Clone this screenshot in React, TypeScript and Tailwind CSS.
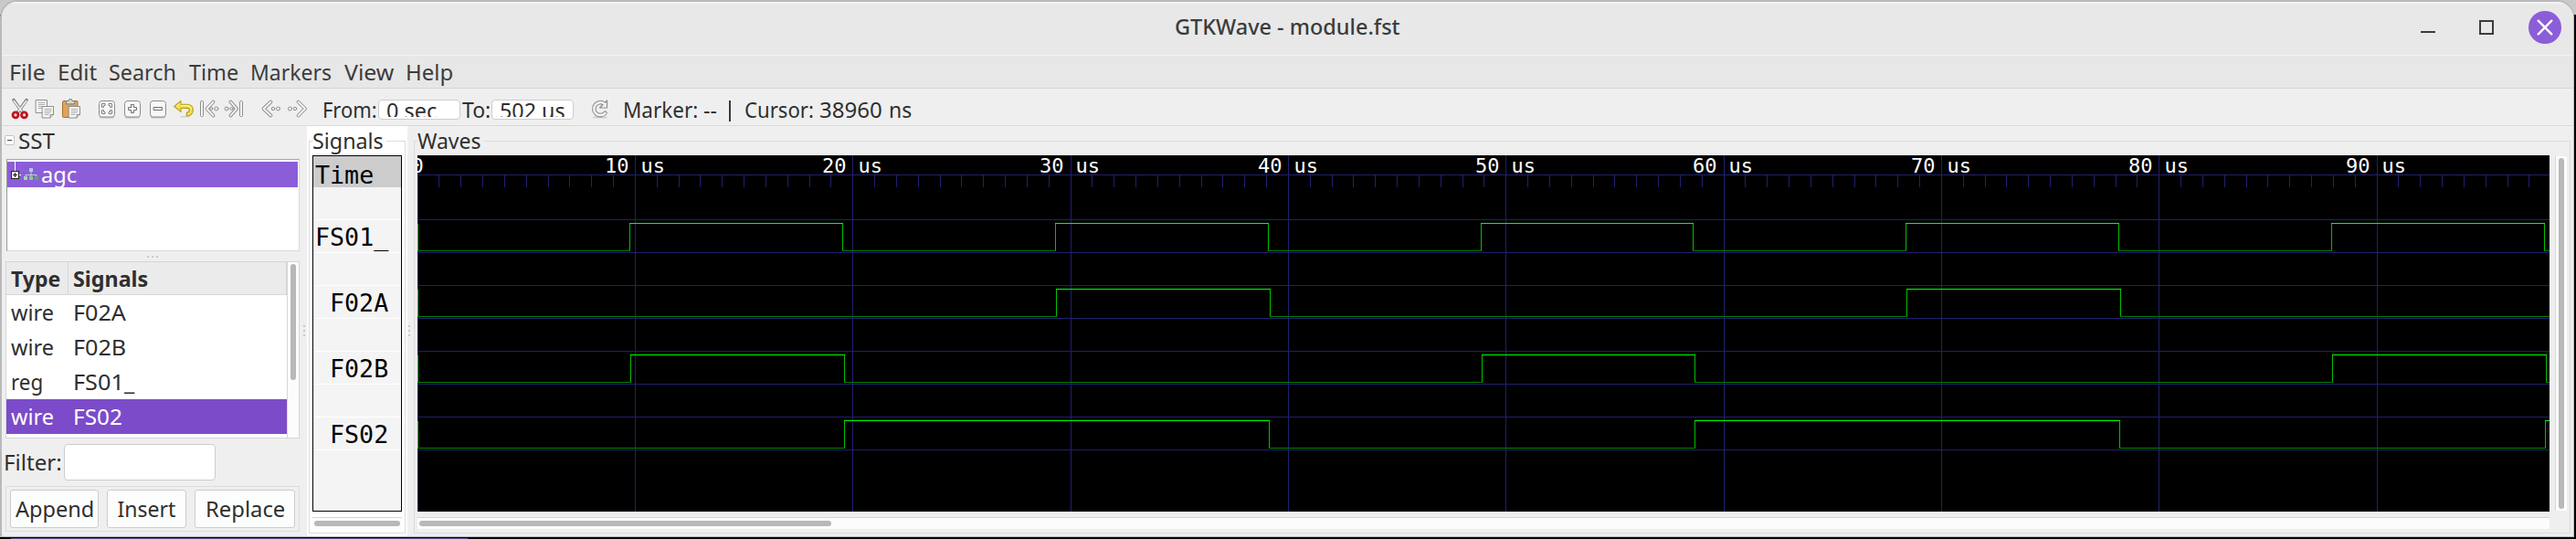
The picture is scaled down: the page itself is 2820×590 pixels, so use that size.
import { useLayoutEffect, useRef } from "react";
import type { ReactNode } from "react";

/* Text squeezed or stretched horizontally so that it fills the width of its box. */
function Fit({ className, children }: { className: string; children: string }) {
  const box = useRef<HTMLDivElement>(null);
  const text = useRef<HTMLSpanElement>(null);
  useLayoutEffect(() => {
    if (!box.current || !text.current) return;
    const ratio = box.current.clientWidth / text.current.offsetWidth;
    text.current.style.transform = `scaleX(${ratio})`;
  }, [children]);
  return (
    <div ref={box} className={`flex shrink-0 items-center whitespace-pre ${className}`}>
      <span ref={text} className="inline-block origin-left">
        {children}
      </span>
    </div>
  );
}

function Icon({ className, children }: { className: string; children: ReactNode }) {
  return (
    <svg viewBox="0 0 24 24" fill="none" strokeLinecap="round" strokeLinejoin="round" className={`h-6 w-6 shrink-0 ${className}`}>
      {children}
    </svg>
  );
}

function Key({ children }: { children: ReactNode }) {
  return (
    <>
      <rect x="4" y="20.5" width="16" height="2" rx="1" fill="#c4c4c4" />
      <rect x="3.5" y="3.5" width="17" height="17.5" rx="3" fill="#f8f8f7" stroke="#8d8f8b" />
      {children}
    </>
  );
}

function Outlined({ d }: { d: string }) {
  return (
    <>
      <path d={d} stroke="#8d8f8b" strokeWidth="3.8" />
      <path d={d} stroke="#f4f4f2" strokeWidth="1.9" />
    </>
  );
}

function Toolbar() {
  return (
    <div className="flex h-[40px] shrink-0 items-center text-[#2f2f2f]">
      <Icon className="ml-2 mt-1">
        <path d="M5 2.5 14.5 16M19 2.5 9.5 16" stroke="#7d7f7b" strokeWidth="3.4" />
        <path d="M5.3 3.5 14 15M18.7 3.5 10 15" stroke="#eeeeec" strokeWidth="1.7" />
        <circle cx="7" cy="18.8" r="3" stroke="#c1121c" strokeWidth="2.8" />
        <circle cx="16.5" cy="18.8" r="3" stroke="#c1121c" strokeWidth="2.8" />
        <path d="M5.6 17.8c.6-.8 1.5-1 2.2-.7M15.2 17.8c.6-.8 1.5-1 2.2-.7" stroke="#f05a5a" strokeWidth=".8" />
      </Icon>
      <Icon className="ml-[3px] mt-1">
        <path d="M2.5 2.5h12v14h-12z" fill="#fafafa" stroke="#8d8f8b" />
        <path d="M5 5.5h7M5 7.5h7M5 9.5h6M5 11.5h4" stroke="#a3a5a1" strokeWidth=".9" />
        <path d="M9.5 9.5h12v9l-3.5 3.5H9.5z" fill="#f6f6f5" stroke="#8d8f8b" />
        <path d="M12 12.5h7M12 14.5h7M12 16.5h6M12 18.5h4" stroke="#a3a5a1" strokeWidth=".9" />
        <path d="M21.5 18.5h-3.5v3.5" fill="#ddd" stroke="#8d8f8b" />
      </Icon>
      <Icon className="ml-[5px] mt-1">
        <rect x="2.5" y="3.5" width="16.5" height="18" rx="1" fill="#dfa45a" stroke="#a8712a" />
        <path d="M6.5 6.5v-3h2.5l.5-1.8h3l.5 1.8h2.500v3z" fill="#d5d7d3" stroke="#777975" strokeWidth=".9" />
        <path d="M9.5 9.5h12v9l-3.5 3.5H9.5z" fill="#f8f8f7" stroke="#8d8f8b" />
        <path d="M12 12.5h7M12 14.5h7M12 16.5h6M12 18.5h4" stroke="#a3a5a1" strokeWidth=".9" />
        <path d="M21.5 18.5h-3.5v3.5" fill="#ddd" stroke="#8d8f8b" />
      </Icon>
      <Icon className="ml-[15px] mt-1">
        <Key>
          <path d="M6.5 10V6.5H10v2H8.5V10zM17.5 10V6.5H14v2h1.5V10zM6.5 14v3.5H10v-2H8.5V14zM17.5 14v3.5H14v-2h1.5V14z" fill="#fff" stroke="#70726e" strokeWidth=".9" />
        </Key>
      </Icon>
      <Icon className="ml-1 mt-1">
        <Key>
          <path d="M10.500 7.500h3v3h3v3h-3v3h-3v-3h-3v-3h3z" fill="#fff" stroke="#70726e" />
        </Key>
      </Icon>
      <Icon className="ml-1 mt-1">
        <Key>
          <path d="M7.500 10.500h9v3h-9z" fill="#fff" stroke="#70726e" />
        </Key>
      </Icon>
      <Icon className="ml-1 mt-1">
        <path d="M9 20.800h9" stroke="#d2d2cc" strokeWidth="1.500" />
        <path d="M1.800 9.500 9 3.500v3.700h7c3.700 0 6.300 2.600 6.300 6.200s-2.600 6.300-5.300 6.300h-1.700v-3.400c2-.2 3.100-1.300 3.100-2.800 0-1.400-1.100-2.100-2.600-2.100H9v4z" fill="#f4de52" stroke="#b99c10" strokeWidth="1.100" />
        <path d="M4 9.300 8 6M9.500 8.700h6.700c2.600 0 4.200 1.700 4.400 4" stroke="#fdf6b4" strokeWidth="1" />
      </Icon>
      <Icon className="ml-[5px] mt-1">
        <rect x="1.500" y="3.500" width="3" height="17" rx="1" fill="#f4f4f2" stroke="#8d8f8b" />
        <Outlined d="M15.500 4.500 8.500 12l7 7.500" />
        <circle cx="13.300" cy="12" r="1.500" fill="#f4f4f2" stroke="#8d8f8b" />
        <circle cx="18.800" cy="12" r="2" fill="#f4f4f2" stroke="#8d8f8b" />
      </Icon>
      <Icon className="ml-0.5 mt-1">
        <rect x="18.500" y="3.500" width="3" height="17" rx="1" fill="#f4f4f2" stroke="#8d8f8b" />
        <Outlined d="m8.500 4.500 6.500 7.500-6.500 7.500" />
        <circle cx="4" cy="12" r="2" fill="#f4f4f2" stroke="#8d8f8b" />
        <circle cx="9.500" cy="12" r="1.500" fill="#f4f4f2" stroke="#8d8f8b" />
      </Icon>
      <Icon className="ml-[17px] mt-1">
        <Outlined d="M11.500 4.500 3.500 12l8 7.500" />
        <circle cx="14" cy="12" r="1.700" fill="#f4f4f2" stroke="#8d8f8b" />
        <circle cx="19.500" cy="12" r="2" fill="#f4f4f2" stroke="#8d8f8b" />
      </Icon>
      <Icon className="ml-1 mt-1">
        <Outlined d="m13.500 4.500 7.500 7.500-7.500 7.500" />
        <circle cx="4.500" cy="12" r="2" fill="#f4f4f2" stroke="#8d8f8b" />
        <circle cx="10" cy="12" r="1.700" fill="#f4f4f2" stroke="#8d8f8b" />
      </Icon>
      <Fit className="ml-4 mt-[7px] w-[60px]">From:</Fit>
      <div className="ml-px mt-[6px] flex h-[22px] w-[90px] shrink-0 items-center rounded-[4px] border border-[#cdcdcd] bg-white pl-2">
        <div className="flex h-[15px] items-center overflow-hidden pt-0.5">
          <Fit className="w-[55px]">0 sec</Fit>
        </div>
      </div>
      <Fit className="ml-0.5 mt-[7px] w-[31px]">To:</Fit>
      <div className="ml-px mt-[6px] flex h-[22px] w-[90px] shrink-0 items-center rounded-[4px] border border-[#cdcdcd] bg-white pl-2">
        <div className="flex h-[15px] items-center overflow-hidden pt-0.5">
          <Fit className="w-[72px]">502 us</Fit>
        </div>
      </div>
      <Icon className="ml-[17px] mt-1">
        <path d="M5 21.500h14" stroke="#c8c8c8" strokeWidth="1.500" />
        <path d="M17.500 16.800A7 7 0 1 1 16.500 6.500" stroke="#8d8f8b" strokeWidth="4.600" />
        <path d="M19.500 3v8h-8z" fill="#f2f2f0" stroke="#8d8f8b" strokeWidth="1.200" />
        <path d="M17.500 16.800A7 7 0 1 1 16.500 6.500" stroke="#f2f2f0" strokeWidth="2.500" />
      </Icon>
      <Fit className="ml-[13px] mt-[7px] w-[82px]">Marker:</Fit>
      <Fit className="ml-1.5 mt-[7px] w-[15px]">--</Fit>
      <span className="ml-[13px] mt-2 h-[23px] w-0.5 bg-[#3a3a3a]" />
      <Fit className="ml-[15px] mt-[7px] w-[76px]">Cursor:</Fit>
      <Fit className="ml-1.5 mt-[7px] w-[69px]">38960</Fit>
      <Fit className="ml-[7px] mt-[7px] w-[25px]">ns</Fit>
    </div>
  );
}

function Dots({ vertical }: { vertical?: boolean }) {
  return (
    <div className={vertical ? "flex flex-col gap-[3px]" : "flex gap-[3px]"}>
      <i className="size-0.5 bg-[#c9c9c9]" />
      <i className="size-0.5 bg-[#c9c9c9]" />
      <i className="size-0.5 bg-[#c9c9c9]" />
    </div>
  );
}

const facs = [
  { type: "wire", name: "F02A", typeWidth: "w-[47px]", nameWidth: "w-[58px]" },
  { type: "wire", name: "F02B", typeWidth: "w-[47px]", nameWidth: "w-[58px]" },
  { type: "reg", name: "FS01_", typeWidth: "w-[35px]", nameWidth: "w-[67px]" },
  { type: "wire", name: "FS02", typeWidth: "w-[47px]", nameWidth: "w-[54px]", selected: true },
];

function SstPanel() {
  return (
    <div className="flex w-[330px] shrink-0 flex-col">
      <div className="flex h-[36px] shrink-0 items-start pl-[3px]">
        <span className="mt-[10px] flex size-[11px] items-center justify-center rounded-[2px] border border-[#c4c4c4] bg-white">
          <i className="h-px w-[5px] bg-[#444]" />
        </span>
        <Fit className="ml-1 h-[33px] w-[40px]">SST</Fit>
      </div>
      <div className="ml-[5px] h-[101px] w-[321px] shrink-0 border border-[#d9d9d9] border-l-[#999] border-t-[#a8a8a8] bg-white pr-px pt-0.5">
        <div className="flex h-[28px] items-start bg-[#8c5dd9] text-white">
          <svg width="36" height="28" className="shrink-0">
            <path d="M8.500 0v10M13 14.500h2" stroke="#fff" />
            <rect x="4.500" y="10.500" width="8" height="8" fill="#fff" stroke="#222" />
            <path d="M6 14.500h5M8.500 12v5" stroke="#111" />
            <path d="M26 11v3M20 17v-2.500h12V17M26 14v3" stroke="#c9c9d6" fill="none" />
            <rect x="24" y="7" width="4" height="4" fill="#a9cdf5" />
            <rect x="18" y="16" width="4" height="4" fill="#9fd89f" />
            <rect x="24" y="16" width="4" height="4" fill="#82cf82" />
            <rect x="30" y="16" width="4" height="4" fill="#4fae4f" />
          </svg>
          <Fit className="ml-px mt-[-2px] h-[32px] w-[39px]">agc</Fit>
        </div>
      </div>
      <div className="flex h-[11px] shrink-0 items-center pl-[159px]">
        <Dots />
      </div>
      <div className="ml-1 flex h-[194px] w-[322px] shrink-0 border border-[#d6d6d6] bg-white">
        <div className="flex w-[307px] shrink-0 flex-col">
          <div className="flex h-[36px] shrink-0 border-b border-r border-[#d6d6d6] bg-[#ebebeb] font-bold">
            <div className="flex w-[68px] border-r border-[#d6d6d6] pl-[5px] pt-0.5">
              <Fit className="w-[54px]">Type</Fit>
            </div>
            <Fit className="ml-[5px] w-[82px] pt-0.5">Signals</Fit>
          </div>
          {facs.map((f) => (
            <div key={f.name} className={`flex h-[38px] shrink-0 pl-[5px] ${f.selected ? "bg-[#7c4bc9] text-white" : ""}`}>
              <div className="flex w-[68px]">
                <Fit className={f.typeWidth}>{f.type}</Fit>
              </div>
              <Fit className={f.nameWidth}>{f.name}</Fit>
            </div>
          ))}
        </div>
        <div className="flex flex-1 justify-center border-l border-[#d6d6d6] bg-[#fcfcfc] pt-0.5">
          <i className="h-[127px] w-1.5 rounded-full bg-[#b8b8b8]" />
        </div>
      </div>
      <div className="flex h-[52px] shrink-0 items-center pl-0.5">
        <Fit className="w-[64px]">Filter:</Fit>
        <div className="ml-0.5 h-[40px] w-[166px] rounded-[4px] border border-[#cdcdcd] bg-white" />
      </div>
      <div className="ml-1 flex h-[50px] w-[322px] shrink-0 items-center border border-[#dcdcdc] pl-1">
        <div className="flex h-[42px] w-[97px] justify-center rounded-[3px] border border-[#cdcdcd] bg-[#fcfefd]">
          <Fit className="w-[86px]">Append</Fit>
        </div>
        <div className="ml-[9px] flex h-[42px] w-[87px] justify-center rounded-[3px] border border-[#cdcdcd] bg-[#fcfefd]">
          <Fit className="w-[64px]">Insert</Fit>
        </div>
        <div className="ml-[9px] flex h-[42px] w-[110px] justify-center rounded-[3px] border border-[#cdcdcd] bg-[#fcfefd]">
          <Fit className="w-[87px]">Replace</Fit>
        </div>
      </div>
    </div>
  );
}

const rows = [
  { id: "gap0", label: "", width: "" },
  { id: "r1", label: "FS01_", width: "w-[80px]" },
  { id: "gap1", label: "", width: "" },
  { id: "r2", label: "F02A", width: "w-[64px]" },
  { id: "gap2", label: "", width: "" },
  { id: "r3", label: "F02B", width: "w-[64px]" },
  { id: "gap3", label: "", width: "" },
  { id: "r4", label: "FS02", width: "w-[64px]" },
];

function FrameTitle({ width, children }: { width: string; children: string }) {
  return (
    <div className="flex h-[32px] shrink-0">
      <i className="mt-4 w-1 border-l border-t border-[#dcdcdc]" />
      <Fit className={`h-[33px] ${width}`}>{children}</Fit>
      <i className="ml-[3px] mt-4 flex-1 border-r border-t border-[#dcdcdc]" />
    </div>
  );
}

function SignalsPanel() {
  return (
    <div className="flex w-[110px] shrink-0 flex-col bg-white pl-0.5 pr-0.5">
      <FrameTitle width="w-[78px]">Signals</FrameTitle>
      <div className="flex h-[414px] shrink-0 flex-col border-x border-b border-[#dcdcdc] pl-[3px]">
        <div className="flex h-[390px] w-[98px] shrink-0 flex-col border border-black bg-[#f4f4f4] font-['DejaVu_Sans_Mono',monospace] text-[26.67px] text-black">
          <div className="flex h-[34px] shrink-0 bg-[#cccccc] pl-0.5 pt-2">
            <Fit className="w-[64px]">Time</Fit>
          </div>
          {rows.map((r) => (
            <div key={r.id} className="flex h-[36px] shrink-0 justify-end border-b border-white pr-[14px] pt-1">
              {r.label && <Fit className={r.width}>{r.label}</Fit>}
            </div>
          ))}
        </div>
        <div className="mt-1.5 flex h-[13px] w-[98px] items-center justify-center border-t border-[#d6d6d6] bg-[#fcfcfc]">
          <i className="h-1.5 w-[94px] rounded-full bg-[#b8b8b8]" />
        </div>
      </div>
    </div>
  );
}

/* Canvas geometry: pixels per microsecond, drawing size, and edge positions of every trace. */
const US = 23.8333;
const W = 2334;
const H = 390;

const traces = [
  { name: "FS01_", top: 74, edges: [232, 465, 698, 931, 1164, 1396, 1629, 1862, 2095, 2328] },
  { name: "F02A", top: 146, edges: [699, 933, 1630, 1864] },
  { name: "F02B", top: 218, edges: [233, 467, 1165, 1398, 2096, 2330] },
  { name: "FS02", top: 290, edges: [467, 932, 1398, 1863, 2329] },
];

function WaveCanvas() {
  const ticks = Array.from({ length: 98 }, (_, i) => i);
  const majors = ticks.filter((i) => i % 10 === 0);
  return (
    <svg width={W} height={H} className="block shrink-0 bg-black" shapeRendering="crispEdges">
      <g fill="#20206f">
        <rect x="0" y="21" width={W} height="1" />
        {[70, 106, 142, 178, 214, 250, 286, 322].map((y) => (
          <rect key={y} x="0" y={y} width={W} height="1" />
        ))}
        {ticks.map((i) => (
          <rect key={i} x={Math.floor(i * US + 0.01)} y="21" width="1" height="14" />
        ))}
        {majors.map((i) => (
          <rect key={i} x={Math.floor(i * US + 0.01)} y={i ? 0 : 21} width="1" height={H} />
        ))}
      </g>
      <g fill="#fff" fontSize="22" textAnchor="middle" className="font-['DejaVu_Sans_Mono',monospace]">
        {majors.map((i) => (
          <text key={i} x={Math.floor(i * US)} y="19" textLength={i ? 66 : 13}>
            {i ? `${i} us` : "0"}
          </text>
        ))}
      </g>
      {traces.map((t) => {
        const stops = [0, ...t.edges, W];
        return (
          <g key={t.name}>
            {stops.slice(0, -1).map((x, i) => (
              <rect key={x} x={x} y={i % 2 ? t.top : t.top + 30} width={stops[i + 1] - x + 1} height="1" fill={i % 2 ? "#00ff00" : "#008000"} />
            ))}
            {stops.slice(0, -1).map((x) => (
              <rect key={x} x={x} y={t.top + 1} width="1" height="29" fill="#00c000" />
            ))}
          </g>
        );
      })}
    </svg>
  );
}

function WavesPanel() {
  return (
    <div className="flex w-[2361px] shrink-0 flex-col">
      <FrameTitle width="w-[70px]">Waves</FrameTitle>
      <div className="flex h-[414px] shrink-0 border-x border-b border-[#dcdcdc] pl-[3px]">
        <div className="flex flex-col">
          <WaveCanvas />
          <div className="mt-1.5 flex h-[13px] items-center border-t border-[#d6d6d6] bg-[#fcfcfc] pl-0.5">
            <i className="h-1.5 w-[451px] rounded-full bg-[#b8b8b8]" />
          </div>
        </div>
        <div className="ml-1.5 mt-px flex h-[388px] w-[13px] items-center justify-center border-l border-[#d6d6d6] bg-[#fcfcfc]">
          <i className="h-[384px] w-1.5 rounded-full bg-[#b8b8b8]" />
        </div>
      </div>
    </div>
  );
}

export default function App() {
  return (
    <div className="h-[590px] w-[2820px] overflow-hidden bg-[linear-gradient(#c9c9c9_0_16px,#000_16px)] font-['Noto_Sans',sans-serif] text-[23px] leading-none text-[#2f2f2f]">
      <div className="flex h-[588px] w-[2818px] flex-col overflow-hidden rounded-t-[19px] border-b border-l-2 border-r border-t-2 border-[#b9b9b9] bg-[#efefef]">
        <div className="flex h-[59px] shrink-0 items-start border-b border-t-2 border-b-[#f3f3f3] border-t-[#f3f3f3] bg-[#e8e8e8] text-[#3c3c3c]">
          <Fit className="ml-[1284px] h-[50px] w-[247px] font-medium">GTKWave - module.fst</Fit>
          <i className="ml-[1117px] mt-[30px] h-0.5 w-4 bg-[#3c3c3c]" />
          <i className="ml-12 mt-[18px] size-4 border-2 border-[#3c3c3c]" />
          <svg width="36" height="36" className="ml-[38px] mt-2">
            <circle cx="18" cy="18" r="18" fill="#8c5dd9" />
            <path d="m10.700 10.700 14.600 14.600m0-14.600L10.700 25.300" stroke="#fff" strokeWidth="2.400" strokeLinecap="round" />
          </svg>
        </div>
        <div className="flex h-[36px] shrink-0 border-b border-[#d6d6d6] bg-[#e7e7e7] pl-[7px] pt-0.5 text-[#3c3c3c]">
          <Fit className="ml-px w-[40px]">File</Fit>
          <Fit className="ml-[13px] w-[43px]">Edit</Fit>
          <Fit className="ml-[13px] w-[74px]">Search</Fit>
          <Fit className="ml-[14px] w-[54px]">Time</Fit>
          <Fit className="ml-[13px] w-[89px]">Markers</Fit>
          <Fit className="ml-[14px] w-[54px]">View</Fit>
          <Fit className="ml-[13px] w-[52px]">Help</Fit>
        </div>
        <Toolbar />
        <div className="flex flex-1 border-t border-[#dadada]">
          <SstPanel />
          <div className="w-1 shrink-0 pt-[218px]">
            <Dots vertical />
          </div>
          <SignalsPanel />
          <div className="w-[7px] shrink-0 pl-px pt-[218px]">
            <Dots vertical />
          </div>
          <WavesPanel />
        </div>
      </div>
      <div className="flex h-0.5 flex-col justify-end bg-black">
        <i className="ml-3 h-px w-[500px] bg-[#5f558f]" />
      </div>
    </div>
  );
}
